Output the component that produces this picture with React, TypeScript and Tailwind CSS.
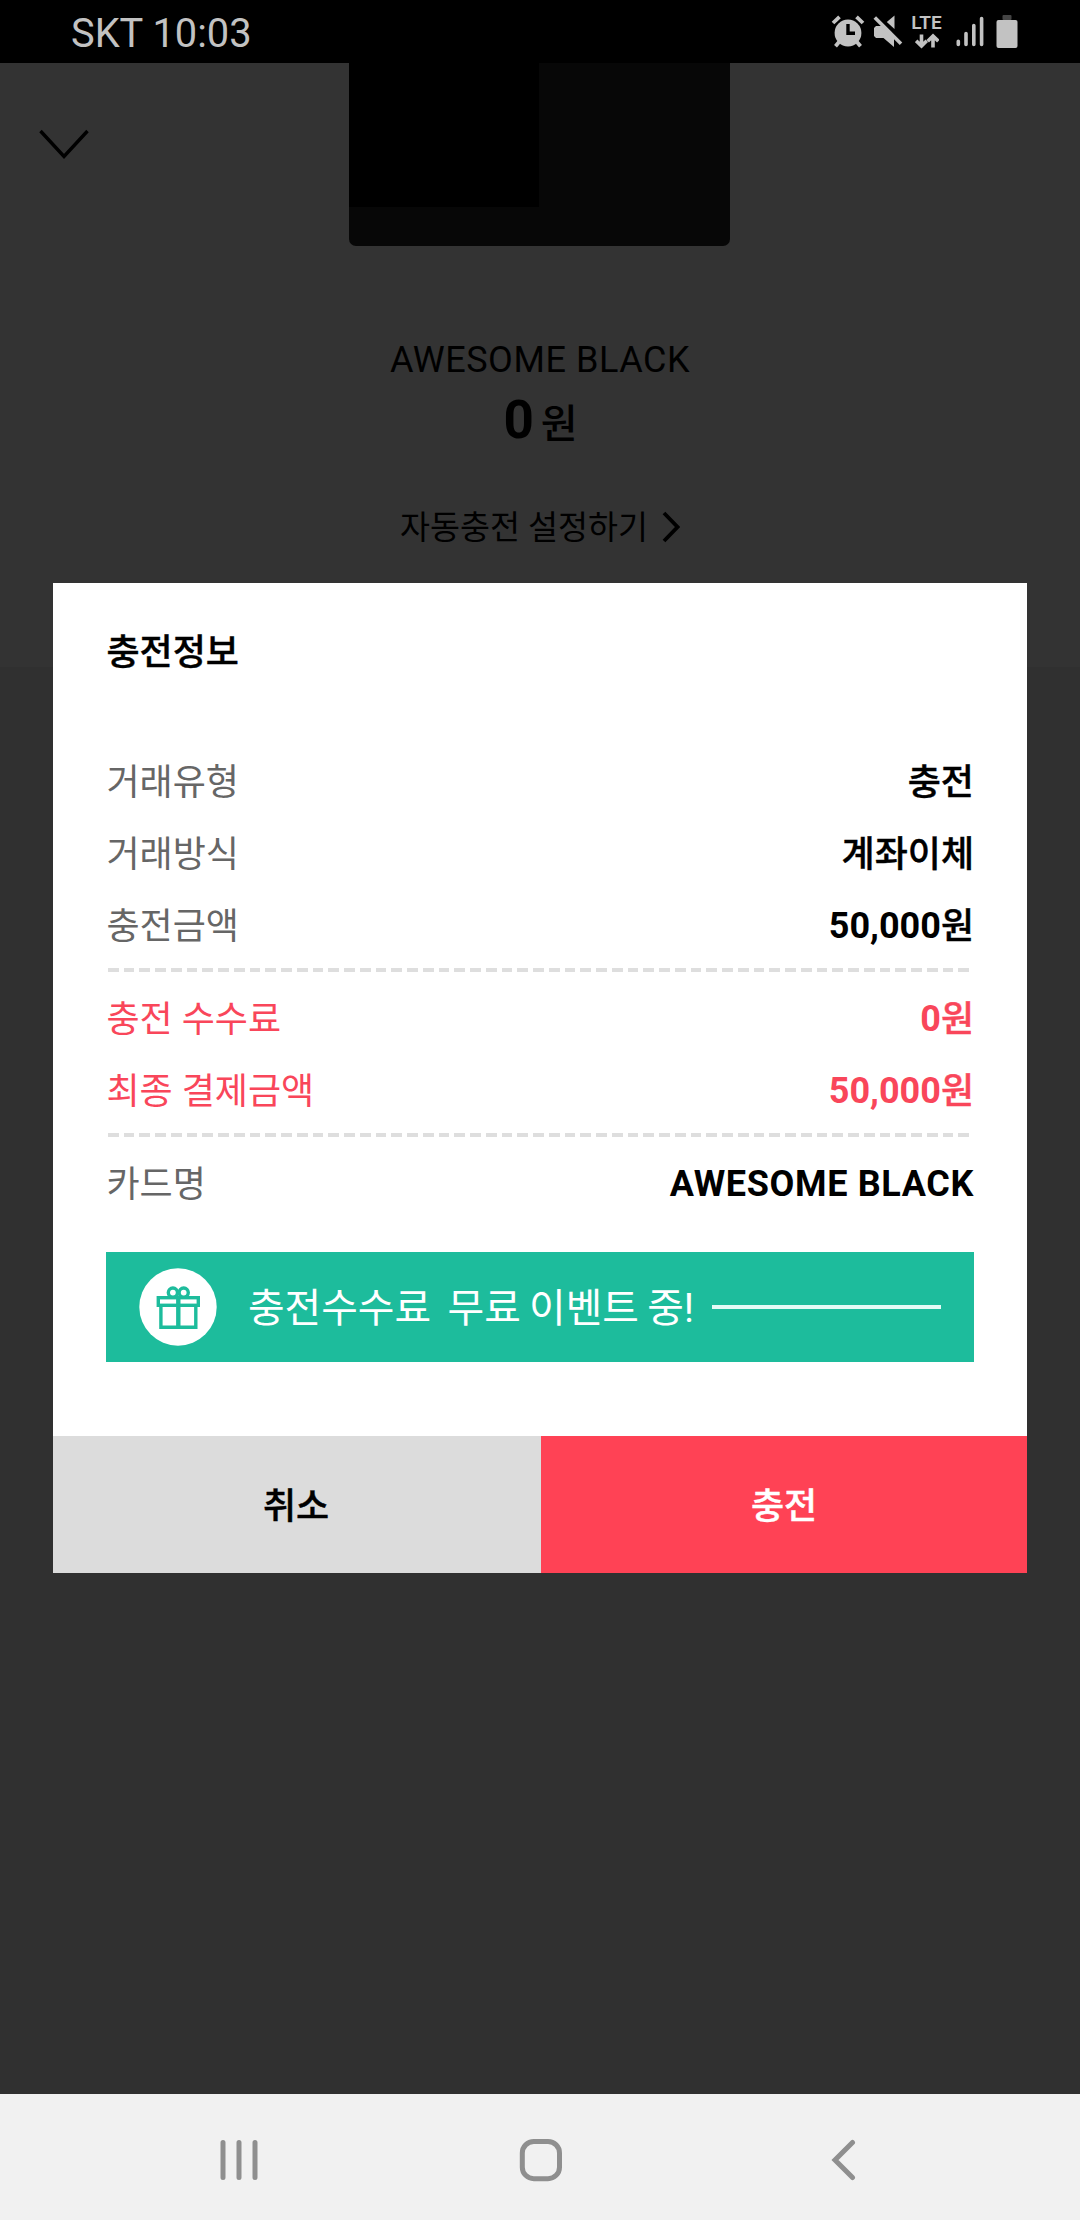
import type { ReactNode } from "react";

type Tone = "default" | "accent";

type InfoRowProps = {
  label: string;
  value: ReactNode;
  tone?: Tone;
};

function InfoRow({ label, value, tone = "default" }: InfoRowProps) {
  const accent = tone === "accent";
  return (
    <div
      className={`flex h-[72px] items-center justify-between whitespace-nowrap pt-[3px] text-[36px] leading-none ${
        accent ? "text-[#f9465a]" : "text-black"
      }`}
    >
      <span className={accent ? "pl-[0.5px]" : "pl-[0.5px] text-[#666666]"}>{label}</span>
      <span className="font-medium [-webkit-text-stroke:0.4px]">{value}</span>
    </div>
  );
}

function Latin({ children }: { children: ReactNode }) {
  return <b className="inline-block -translate-y-px font-bold [-webkit-text-stroke:0]">{children}</b>;
}

function Won({ amount }: { amount: string }) {
  return (
    <>
      <Latin>{amount}</Latin>원
    </>
  );
}

function DashedDivider() {
  return (
    <div className="h-[21px] pt-[7px]">
      <div className="ml-[1.5px] h-[4px] w-[862px] bg-[repeating-linear-gradient(90deg,#dedede_0_10.6px,transparent_10.6px_15.75px)]" />
    </div>
  );
}

function StatusBar() {
  return (
    <header className="flex h-[63px] shrink-0 items-center justify-between bg-black pl-[71px] pr-[62px] text-[#c2c2c2]">
      <span className="pt-[4px] text-[39.8px] leading-none">SKT 10:03</span>
      <div className="flex h-full items-start pt-[15px]">
        {/* alarm */}
        <svg width="34" height="33" viewBox="0 0 34 33" className="mr-[8px]">
          <circle cx="17" cy="18" r="13.4" fill="currentColor" />
          <path d="M2 8L8.5 1.8M32 8L25.5 1.8" stroke="currentColor" strokeWidth="3.8" />
          <path d="M8 27L4.5 31.2M26 27L29.5 31.2" stroke="currentColor" strokeWidth="3.8" />
          <path d="M17 9V18.3H24" fill="none" stroke="#000" strokeWidth="3.4" />
        </svg>
        {/* sound off */}
        <svg width="30" height="33" viewBox="0 0 30 33" className="mr-[8px]">
          <path d="M1 13L3 11H10L21 22V32L10.5 23H3L1 21Z" fill="currentColor" />
          <path d="M13.8 7L21.5 .5V14Z" fill="currentColor" />
          <path d="M1.8 2.5L28 28.7" stroke="currentColor" strokeWidth="3.6" />
        </svg>
        <div className="mr-[14px] flex w-[31px] flex-col items-center">
          <span className="text-[19px] font-semibold leading-[16px]">LTE</span>
          <svg width="24" height="16" viewBox="0 0 24 16" className="mt-[2px]">
            <g fill="none" stroke="currentColor" strokeWidth="3.6">
              <path d="M6.5 1.5V13M1.2 7.8L6.5 13L11.8 7.8" />
              <path d="M18 14.5V3M12.7 8.2L18 3L23.3 8.2" />
            </g>
          </svg>
        </div>
        <svg width="28" height="33" viewBox="0 0 28 33" className="mr-[12px]">
          <g stroke="currentColor" strokeWidth="3.6" strokeLinecap="round">
            <path d="M2.3 26.3V29.4M10 18.5V29.4M17.8 10.5V29.4M25.6 3.5V29.4" />
          </g>
        </svg>
        <svg width="22" height="33" viewBox="0 0 22 33">
          <rect x="6.5" y="0" width="9" height="5" rx="1" fill="#444" />
          <rect x="0.5" y="5" width="21" height="28" rx="2" fill="currentColor" />
        </svg>
      </div>
    </header>
  );
}

function CardSummary() {
  return (
    <section className="flex h-[604px] flex-col items-center bg-[#333333] text-black">
      <div className="flex w-full justify-between">
        <div className="w-[349px] pl-[39px] pt-[66px]">
          <svg width="50" height="32" viewBox="0 0 50 32">
            <path d="M1.5 2L25 27.5L48.5 2" fill="none" stroke="#000" strokeWidth="3.4" />
          </svg>
        </div>
        <div className="h-[183px] w-[381px] overflow-hidden rounded-b-[7px] bg-[#070707]">
          <div className="h-[144px] w-[190px] bg-black" />
        </div>
        <div className="w-[350px]" />
      </div>
      <p className="mt-[96px] text-[36px] leading-[36px] tracking-[0.55px]">AWESOME BLACK</p>
      <p className="mt-[14px] flex items-baseline gap-[7px] pl-px leading-[56px]">
        <span className="text-[53px] font-bold">0</span>
        <span className="text-[40px] font-medium">원</span>
      </p>
      <div className="mt-[57px] flex items-center">
        <span className="text-[32.6px] leading-[36px]">자동충전 설정하기</span>
        <svg width="18" height="32" viewBox="0 0 18 32" className="mb-[2px] ml-[14px]">
          <path d="M2 2L15.5 16L2 30" fill="none" stroke="#000" strokeWidth="3.8" />
        </svg>
      </div>
    </section>
  );
}

function EventBanner() {
  return (
    <div className="mt-[33px] flex h-[110px] items-center bg-[#1dbc9c] px-[33px]">
      <svg width="78" height="78" viewBox="0 0 78 78" className="shrink-0">
        <circle cx="39" cy="39" r="38.7" fill="#fff" />
        <g fill="none" stroke="#1dbc9c">
          <rect x="19.3" y="29.7" width="40" height="7.6" strokeWidth="3.4" />
          <path d="M21.9 38V59.3H56.8V38" strokeWidth="3.4" />
          <path d="M39.3 28V60" strokeWidth="4.4" />
          <circle cx="33.9" cy="24.6" r="4.6" strokeWidth="3.4" />
          <circle cx="44.7" cy="24.6" r="4.6" strokeWidth="3.4" />
        </g>
      </svg>
      <span className="ml-[31px] mt-[3px] whitespace-pre text-[39.8px] leading-none text-white [word-spacing:-1.6px]">
        충전수수료  무료 이벤트 중!
      </span>
      <span className="ml-auto h-[4px] w-[229px] bg-[#e3fbf6]" />
    </div>
  );
}

function ChargeDialog() {
  return (
    <div className="w-[974px] bg-white">
      <div className="px-[53px] pb-[74px] pt-[52px]">
        <h2 className="mb-[74px] pl-[0.5px] text-[36px] font-medium leading-[36px] text-black [-webkit-text-stroke:0.4px]">
          충전정보
        </h2>
        <InfoRow label="거래유형" value="충전" />
        <InfoRow label="거래방식" value="계좌이체" />
        <InfoRow label="충전금액" value={<Won amount="50,000" />} />
        <DashedDivider />
        <InfoRow label="충전 수수료" value={<Won amount="0" />} tone="accent" />
        <InfoRow label="최종 결제금액" value={<Won amount="50,000" />} tone="accent" />
        <DashedDivider />
        <InfoRow
          label="카드명"
          value={
            <span className="tracking-[0.65px]">
              <Latin>AWESOME BLACK</Latin>
            </span>
          }
        />
        <EventBanner />
      </div>
      <div className="flex h-[137px] text-[36px] font-medium leading-none [-webkit-text-stroke:0.4px]">
        <button className="w-[488px] bg-[#dcdcdc] pr-[2px] pt-[4px] text-black">취소</button>
        <button className="flex-1 bg-[#ff4255] pt-[4px] text-white">충전</button>
      </div>
    </div>
  );
}

function NavigationBar() {
  return (
    <nav className="flex h-[126px] shrink-0 items-center justify-between bg-[#f1f1f1] px-[220px] pt-[6px] text-[#8f8f8f]">
      <svg width="38" height="42" viewBox="0 0 38 42">
        <path d="M3 3.5V38.5M19 3.5V38.5M35 3.5V38.5" stroke="currentColor" strokeWidth="5" strokeLinecap="round" />
      </svg>
      <svg width="44" height="44" viewBox="0 0 44 44">
        <rect x="4.3" y="3.5" width="37.2" height="37.2" rx="11.5" fill="none" stroke="currentColor" strokeWidth="5" />
      </svg>
      <svg width="38" height="42" viewBox="0 0 38 42">
        <path d="M30.5 3.5L13 21L30.5 38.5" fill="none" stroke="currentColor" strokeWidth="5" strokeLinecap="round" />
      </svg>
    </nav>
  );
}

export default function App() {
  return (
    <div className="flex h-[2220px] w-[1080px] flex-col bg-black font-[Roboto,'Noto_Sans_CJK_KR',sans-serif]">
      <StatusBar />
      <main className="relative flex-1 bg-[#303030]">
        <CardSummary />
        <div className="absolute inset-0 flex items-start justify-center pt-[520px]">
          <ChargeDialog />
        </div>
      </main>
      <NavigationBar />
    </div>
  );
}
